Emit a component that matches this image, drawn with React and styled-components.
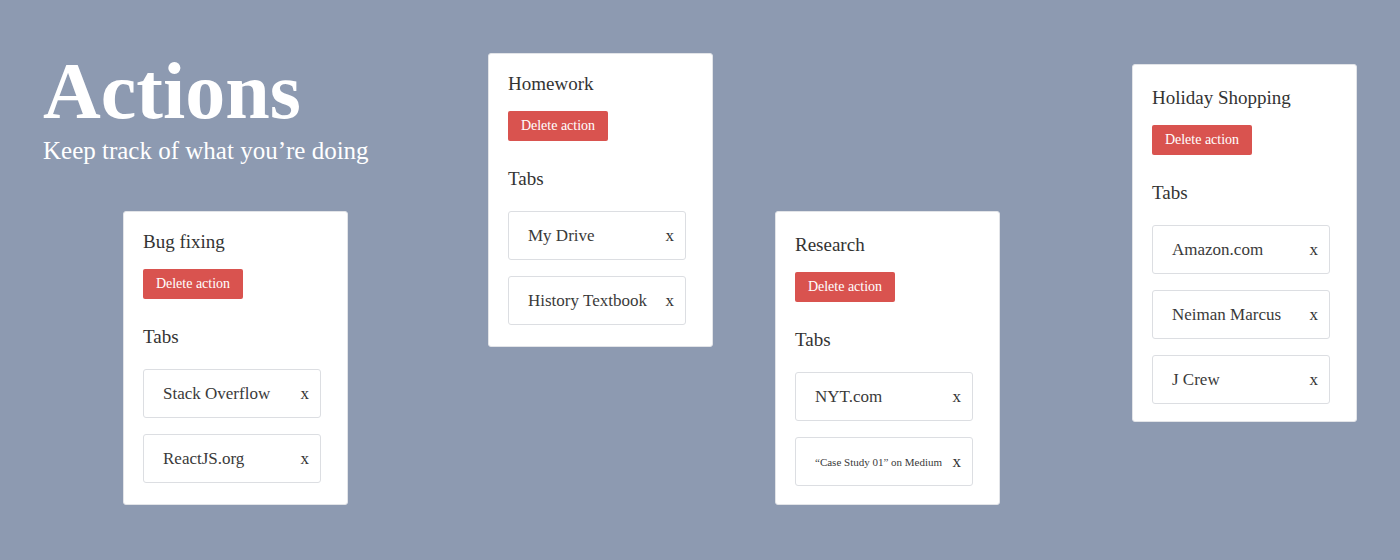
import React from "react";
import styled, { createGlobalStyle } from "styled-components";

const Global = createGlobalStyle`
  html, body { margin: 0; padding: 0; }
  body {
    background: #8d9ab1;
    font-family: "Liberation Serif", "DejaVu Serif", serif;
    width: 1400px;
    height: 560px;
    overflow: hidden;
  }
`;

const Page = styled.div`
  display: grid;
  grid-template-columns: 445px 287px 357px 225px;
  align-items: start;
  padding-left: 43px;
`;

const Column = styled.div`
  display: flex;
  flex-direction: column;
  align-items: flex-start;
  margin-top: ${(p) => p.$top}px;
`;

const Header = styled.header`
  display: flex;
  flex-direction: column;
  color: #ffffff;
`;

const Title = styled.h1`
  margin: 0;
  font-size: 80px;
  line-height: 80px;
  font-weight: 700;
  letter-spacing: 0;
`;

const Subtitle = styled.p`
  margin: 6px 0 0;
  font-size: 25px;
  line-height: 28px;
  font-weight: 400;
`;

const Card = styled.section`
  box-sizing: border-box;
  width: 225px;
  background: #ffffff;
  border: 1px solid #e2e4e8;
  border-radius: 3px;
  padding: ${(p) => p.$padTop}px 26px ${(p) => p.$padBottom}px 19px;
  margin-left: ${(p) => p.$indent || 0}px;
  margin-top: ${(p) => p.$gap || 0}px;
  display: flex;
  flex-direction: column;
  align-items: flex-start;
`;

const CardTitle = styled.h2`
  margin: 0;
  font-size: 19px;
  line-height: 22px;
  font-weight: 400;
  color: #333333;
`;

const DeleteButton = styled.button`
  margin-top: 16px;
  height: 30px;
  width: 100px;
  border: none;
  border-radius: 2px;
  background: #d9534f;
  color: #ffffff;
  font-family: "Liberation Serif", "DejaVu Serif", serif;
  font-size: 14px;
  padding: 0;
`;

const SectionLabel = styled.h3`
  margin: 27px 0 0;
  font-size: 19px;
  line-height: 22px;
  font-weight: 400;
  color: #333333;
`;

const TabList = styled.ul`
  list-style: none;
  margin: 21px 0 0;
  padding: 0;
  display: flex;
  flex-direction: column;
  gap: 16px;
  width: 178px;
`;

const TabItem = styled.li`
  box-sizing: border-box;
  height: 49px;
  border: 1px solid #dcdee2;
  border-radius: 3px;
  display: flex;
  align-items: center;
  justify-content: space-between;
  padding: 0 11px 0 19px;
  color: #3a3a3a;
`;

const TabName = styled.span`
  font-size: ${(p) => (p.$small ? 11 : 17)}px;
  white-space: nowrap;
`;

const Close = styled.span`
  font-size: 17px;
  color: #333333;
`;

const actions = [
  {
    name: "Bug fixing",
    tabs: ["Stack Overflow", "ReactJS.org"],
  },
  {
    name: "Homework",
    tabs: ["My Drive", "History Textbook"],
  },
  {
    name: "Research",
    tabs: ["NYT.com", { label: "\u201cCase Study 01\u201d on Medium", small: true }],
  },
  {
    name: "Holiday Shopping",
    tabs: ["Amazon.com", "Neiman Marcus", "J Crew"],
  },
];

function ActionCard({ action, padTop = 19, padBottom = 21, indent, gap }) {
  return (
    <Card $padTop={padTop} $padBottom={padBottom} $indent={indent} $gap={gap}>
      <CardTitle>{action.name}</CardTitle>
      <DeleteButton>Delete action</DeleteButton>
      <SectionLabel>Tabs</SectionLabel>
      <TabList>
        {action.tabs.map((t) => {
          const label = typeof t === "string" ? t : t.label;
          const small = typeof t === "string" ? false : t.small;
          return (
            <TabItem key={label}>
              <TabName $small={small}>{label}</TabName>
              <Close>x</Close>
            </TabItem>
          );
        })}
      </TabList>
    </Card>
  );
}

export default function App() {
  return (
    <>
      <Global />
      <Page>
        <Column $top={51}>
          <Header>
            <Title>Actions</Title>
            <Subtitle>Keep track of what you’re doing</Subtitle>
          </Header>
          <ActionCard action={actions[0]} indent={80} gap={46} />
        </Column>
        <Column $top={53}>
          <ActionCard action={actions[1]} />
        </Column>
        <Column $top={211}>
          <ActionCard action={actions[2]} padTop={22} padBottom={18} />
        </Column>
        <Column $top={64}>
          <ActionCard action={actions[3]} padTop={22} padBottom={17} />
        </Column>
      </Page>
    </>
  );
}
